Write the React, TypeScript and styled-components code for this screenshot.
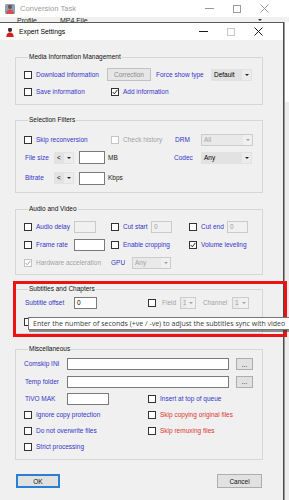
import React from "react";
import styled, { createGlobalStyle } from "styled-components";

const GlobalStyle = createGlobalStyle`
  html, body { margin: 0; padding: 0; }
  body {
    width: 289px; height: 500px; overflow: hidden; background: #f0f0f0;
    font-family: "Liberation Sans", Arial, sans-serif;
  }
  #root { width: 289px; height: 500px; }
`;

const Page = styled.div`
  position: relative;
  width: 289px;
  height: 500px;
  overflow: hidden;
  background: #f0f0f0;
  display: flex;
  flex-direction: column;
`;

/* ---------- background window ---------- */
const BackTitle = styled.div`
  height: 17px;
  flex: none;
  background: #ffffff;
  display: flex;
  align-items: center;
  padding-left: 5px;
  box-sizing: border-box;
`;

const BackTitleText = styled.span`
  margin-left: 5px;
  font-size: 7.6px;
  color: #9c9c9c;
  flex: 1;
  white-space: nowrap;
`;

const BackRow = styled.div`
  height: 5px;
  flex: none;
  overflow: hidden;
  background: #f0f0f0;
  display: flex;
  align-items: flex-end;
  padding-left: 17px;
  box-sizing: border-box;
  font-size: 7px;
  color: #222;
`;

const BackRowText = styled.span<{ $w: number }>`
  width: ${(p) => p.$w}px;
  flex: none;
  line-height: 8px;
  margin-bottom: -3px;
`;

const BackArrow = styled.span`
  margin-left: auto;
  margin-right: 27px;
  margin-bottom: 1px;
  border-left: 2.5px solid transparent;
  border-right: 2.5px solid transparent;
  border-top: 2.5px solid #333;
`;

/* ---------- dialog ---------- */
const DialogArea = styled.div`
  flex: 1;
  display: flex;
  min-height: 0;
`;

const Dialog = styled.div`
  width: 283px;
  flex: none;
  display: flex;
  flex-direction: column;
  border-top: 1px solid #5a5a5a;
  border-right: 1px solid #4a4a4a;
  background: #f0f0f0;
`;

const RightStrip = styled.div`
  flex: 1;
  background: linear-gradient(#ffffff 0 80px, #ececec 80px);
  border-left: 1px solid #9a9a9a;
`;

const TitleBar = styled.div`
  height: 17px;
  flex: none;
  background: #ffffff;
  display: flex;
  align-items: center;
  padding-left: 5px;
`;

const TitleText = styled.span`
  margin-left: 4px;
  font-size: 6.8px;
  color: #000;
  flex: 1;
  white-space: nowrap;
`;

const Controls = styled.div`
  display: flex;
  align-items: center;
  padding-right: 12px;
`;

const CtrlBtn = styled.span<{ $w: number }>`
  width: ${(p) => p.$w}px;
  display: flex;
  justify-content: center;
  align-items: center;
`;

const Body = styled.div`
  flex: 1;
  padding: 13px 0 0 15px;
  display: flex;
  flex-direction: column;
`;

const Group = styled.fieldset<{ $mt: number; $pt: number; $pb: number }>`
  margin: ${(p) => p.$mt}px 0 0 0;
  width: 248px;
  box-sizing: border-box;
  padding: ${(p) => p.$pt}px 0 ${(p) => p.$pb}px 8px;
  border: 1px solid #d6d6d6;
  min-inline-size: 0;
`;

const Legend = styled.legend`
  font-size: 6.5px;
  line-height: 8px;
  padding: 0 1px;
  margin-left: 4px;
  color: #111;
`;

const Row = styled.div<{ $h: number }>`
  height: ${(p) => p.$h}px;
  display: flex;
  align-items: center;
`;

const Cell = styled.div<{ $w: number }>`
  width: ${(p) => p.$w}px;
  flex: none;
  display: flex;
  align-items: center;
  white-space: nowrap;
`;

type Tone = "blue" | "red" | "grey" | "dark";
const toneColor: Record<Tone, string> = {
  blue: "#3535c9",
  red: "#e03434",
  grey: "#a3a3a3",
  dark: "#1a1a1a",
};

const Label = styled.span<{ $tone?: Tone; $indent?: number }>`
  font-size: 6.5px;
  line-height: 8px;
  color: ${(p) => toneColor[p.$tone || "blue"]};
  margin-left: ${(p) => p.$indent || 0}px;
  white-space: nowrap;
`;

const Box = styled.span<{ $disabled?: boolean }>`
  width: 8px;
  height: 8px;
  flex: none;
  box-sizing: border-box;
  border: 1px solid ${(p) => (p.$disabled ? "#c4c4c4" : "#333")};
  background: #fff;
  display: flex;
  align-items: center;
  justify-content: center;
  margin-right: 4px;
`;

const TextBox = styled.div<{ $w: number; $h?: number; $disabled?: boolean }>`
  width: ${(p) => p.$w}px;
  height: ${(p) => p.$h || 12}px;
  flex: none;
  box-sizing: border-box;
  border: 1px solid ${(p) => (p.$disabled ? "#cacaca" : "#7a7a7a")};
  background: ${(p) => (p.$disabled ? "#f0f0f0" : "#fff")};
  font-size: 6.5px;
  line-height: 10px;
  padding-left: 2px;
  color: ${(p) => (p.$disabled ? "#a0a0a0" : "#000")};
`;

const SelectBox = styled.div<{ $w: number; $disabled?: boolean }>`
  width: ${(p) => p.$w}px;
  height: 12px;
  flex: none;
  box-sizing: border-box;
  display: flex;
  border: 1px solid ${(p) => (p.$disabled ? "#cccccc" : "#e2e2e2")};
  background: ${(p) => (p.$disabled ? "#e9e9e9" : "#e2e2e2")};
  font-size: 6.5px;
  line-height: 10px;
  color: ${(p) => (p.$disabled ? "#a3a3a3" : "#000")};
`;

const SelectText = styled.span`
  flex: 1;
  padding-left: 2px;
  overflow: hidden;
  white-space: nowrap;
`;

const SelectArrow = styled.span<{ $disabled?: boolean }>`
  width: 9px;
  flex: none;
  display: flex;
  align-items: center;
  justify-content: center;
  background: ${(p) => (p.$disabled ? "#f0f0f0" : "#ececec")};
  &::after {
    content: "";
    border-left: 2px solid transparent;
    border-right: 2px solid transparent;
    border-top: 2px solid ${(p) => (p.$disabled ? "#a0a0a0" : "#222")};
  }
`;

const Button = styled.div<{ $w: number; $h?: number; $disabled?: boolean; $default?: boolean }>`
  width: ${(p) => p.$w}px;
  height: ${(p) => p.$h || 12}px;
  flex: none;
  box-sizing: border-box;
  border: 1px solid ${(p) => (p.$default ? "#2a7fd4" : p.$disabled ? "#c2c2c2" : "#adadad")};
  box-shadow: ${(p) => (p.$default ? "inset 0 0 0 1px #2a7fd4" : "none")};
  background: ${(p) => (p.$disabled ? "#e6e6e6" : "#e1e1e1")};
  display: flex;
  align-items: center;
  justify-content: center;
  font-size: 6.5px;
  color: ${(p) => (p.$disabled ? "#8c8c8c" : "#111")};
`;

const Spacer = styled.div<{ $w: number }>`
  width: ${(p) => p.$w}px;
  flex: none;
`;

const ButtonRow = styled.div`
  margin-top: 14px;
  width: 248px;
  display: flex;
  justify-content: space-between;
  padding: 0 1px;
  box-sizing: border-box;
`;

/* ---------- overlays ---------- */
const Highlight = styled.div`
  position: absolute;
  left: 13px;
  top: 281px;
  width: 274px;
  height: 56px;
  box-sizing: border-box;
  border: 3px solid #ee1313;
  pointer-events: none;
`;

const Tooltip = styled.div`
  position: absolute;
  left: 28px;
  top: 317px;
  width: 262px;
  height: 13px;
  box-sizing: border-box;
  border: 1px solid #767676;
  background: #ffffff;
  box-shadow: 1px 2px 0 rgba(60, 60, 60, 0.55);
  font-family: "Open Sans", "Liberation Sans", sans-serif;
  font-size: 7px;
  line-height: 11px;
  color: #3a3a3a;
  padding-left: 4px;
  white-space: nowrap;
`;

/* ---------- drawings ---------- */
const Check = ({ grey }: { grey?: boolean }) => (
  <svg width="6" height="6" viewBox="0 0 6 6">
    <polyline points="0.6,3 2.3,4.8 5.4,0.9" fill="none" stroke={grey ? "#a8a8a8" : "#222"} strokeWidth="1" />
  </svg>
);

const CheckBox = ({
  label,
  tone,
  checked,
  disabled,
}: {
  label?: string;
  tone?: Tone;
  checked?: boolean;
  disabled?: boolean;
}) => (
  <>
    <Box $disabled={disabled}>{checked && <Check grey={disabled} />}</Box>
    {label && <Label $tone={disabled ? "grey" : tone}>{label}</Label>}
  </>
);

const Select = ({ w, text, disabled }: { w: number; text: string; disabled?: boolean }) => (
  <SelectBox $w={w} $disabled={disabled}>
    <SelectText>{text}</SelectText>
    <SelectArrow $disabled={disabled} />
  </SelectBox>
);

const AppIcon = ({ faded }: { faded?: boolean }) => (
  <svg width="10" height="10" viewBox="0 0 10 10" style={{ opacity: faded ? 0.8 : 1 }}>
    {faded && <rect x="0" y="0" width="10" height="10" rx="1.5" fill="#6f8aa8" />}
    <circle cx="5" cy="3" r="2" fill="#3a2a2a" />
    <path d="M1.3 10 C1.5 6.4 3 5.4 5 5.4 C7 5.4 8.5 6.4 8.7 10 Z" fill="#d32020" />
    <rect x="3.3" y="1.2" width="3.4" height="1.1" fill="#7a1515" />
  </svg>
);

const MinIcon = ({ color }: { color: string }) => (
  <svg width="9" height="9" viewBox="0 0 9 9">
    <line x1="0" y1="4.5" x2="9" y2="4.5" stroke={color} strokeWidth="1" />
  </svg>
);

const MaxIcon = ({ color }: { color: string }) => (
  <svg width="8" height="8" viewBox="0 0 8 8">
    <rect x="0.5" y="0.5" width="7" height="7" fill="none" stroke={color} strokeWidth="1" />
  </svg>
);

const CloseIcon = ({ color }: { color: string }) => (
  <svg width="9" height="9" viewBox="0 0 9 9">
    <path d="M0.5 0.5 L8.5 8.5 M8.5 0.5 L0.5 8.5" stroke={color} strokeWidth="1" />
  </svg>
);

const WindowControls = ({ dim, maxDim }: { dim?: boolean; maxDim?: boolean }) => {
  const c = dim ? "#9a9a9a" : "#1a1a1a";
  return (
    <Controls>
      <CtrlBtn $w={28}>
        <MinIcon color={c} />
      </CtrlBtn>
      <CtrlBtn $w={28}>
        <MaxIcon color={maxDim ? "#c8c8c8" : c} />
      </CtrlBtn>
      <CtrlBtn $w={26}>
        <CloseIcon color={c} />
      </CtrlBtn>
    </Controls>
  );
};

export default function App() {
  return (
    <>
      <GlobalStyle />
      <Page>
        <BackTitle>
          <AppIcon faded />
          <BackTitleText>Conversion Task</BackTitleText>
          <WindowControls dim />
        </BackTitle>
        <BackRow>
          <BackRowText $w={43}>Profile</BackRowText>
          <BackRowText $w={60}>MP4 File</BackRowText>
          <BackArrow />
        </BackRow>

        <DialogArea>
          <Dialog>
            <TitleBar>
              <AppIcon />
              <TitleText>Expert Settings</TitleText>
              <WindowControls maxDim />
            </TitleBar>

            <Body>
              <Group $mt={0} $pt={5} $pb={4}>
                <Legend>Media Information Management</Legend>
                <Row $h={17}>
                  <Cell $w={83}>
                    <CheckBox label="Download information" />
                  </Cell>
                  <Button $w={44} $h={13} $disabled>
                    Correction
                  </Button>
                  <Spacer $w={5} />
                  <Cell $w={55}>
                    <Label>Force show type</Label>
                  </Cell>
                  <Select w={41} text="Default" />
                </Row>
                <Row $h={17}>
                  <Cell $w={87}>
                    <CheckBox label="Save information" />
                  </Cell>
                  <Cell $w={80}>
                    <CheckBox label="Add information" checked />
                  </Cell>
                </Row>
              </Group>

              <Group $mt={11} $pt={7} $pb={3}>
                <Legend>Selection Filters</Legend>
                <Row $h={17}>
                  <Cell $w={87}>
                    <CheckBox label="Skip reconversion" />
                  </Cell>
                  <Cell $w={64}>
                    <CheckBox label="Check history" disabled />
                  </Cell>
                  <Cell $w={26}>
                    <Label>DRM</Label>
                  </Cell>
                  <Select w={52} text="All" disabled />
                </Row>
                <Row $h={19}>
                  <Cell $w={30}>
                    <Label $indent={1}>File size</Label>
                  </Cell>
                  <Select w={20} text="<" />
                  <Spacer $w={5} />
                  <TextBox $w={26} $h={13} />
                  <Cell $w={69}>
                    <Label $tone="dark" $indent={3}>MB</Label>
                  </Cell>
                  <Cell $w={27}>
                    <Label>Codec</Label>
                  </Cell>
                  <Select w={51} text="Any" />
                </Row>
                <Row $h={22}>
                  <Cell $w={30}>
                    <Label $indent={1}>Bitrate</Label>
                  </Cell>
                  <Select w={20} text="<" />
                  <Spacer $w={5} />
                  <TextBox $w={26} $h={13} />
                  <Cell $w={30}>
                    <Label $tone="dark" $indent={3}>Kbps</Label>
                  </Cell>
                </Row>
              </Group>

              <Group $mt={12} $pt={5} $pb={2}>
                <Legend>Audio and Video</Legend>
                <Row $h={18}>
                  <Cell $w={50}>
                    <CheckBox label="Audio delay" />
                  </Cell>
                  <TextBox $w={22} $disabled />
                  <Spacer $w={15} />
                  <Cell $w={40}>
                    <CheckBox label="Cut start" />
                  </Cell>
                  <TextBox $w={21} $disabled>
                    0
                  </TextBox>
                  <Spacer $w={17} />
                  <Cell $w={38}>
                    <CheckBox label="Cut end" />
                  </Cell>
                  <TextBox $w={21} $disabled>
                    0
                  </TextBox>
                </Row>
                <Row $h={18}>
                  <Cell $w={50}>
                    <CheckBox label="Frame rate" />
                  </Cell>
                  <TextBox $w={31} />
                  <Spacer $w={6} />
                  <Cell $w={78}>
                    <CheckBox label="Enable cropping" />
                  </Cell>
                  <Cell $w={60}>
                    <CheckBox label="Volume leveling" checked />
                  </Cell>
                </Row>
                <Row $h={18}>
                  <Cell $w={87}>
                    <CheckBox label="Hardware acceleration" checked disabled />
                  </Cell>
                  <Cell $w={21}>
                    <Label>GPU</Label>
                  </Cell>
                  <Select w={39} text="Any" disabled />
                </Row>
              </Group>

              <Group $mt={10} $pt={1} $pb={2}>
                <Legend>Subtitles and Chapters</Legend>
                <Row $h={18}>
                  <Cell $w={50}>
                    <Label $indent={1}>Subtitle offset</Label>
                  </Cell>
                  <TextBox $w={23}>0</TextBox>
                  <Spacer $w={51} />
                  <Cell $w={32}>
                    <CheckBox />
                    <Label $tone="grey" $indent={2}>Field</Label>
                  </Cell>
                  <Select w={16} text="1" disabled />
                  <Spacer $w={7} />
                  <Cell $w={29}>
                    <Label $tone="grey">Channel</Label>
                  </Cell>
                  <Select w={17} text="1" disabled />
                </Row>
                <Row $h={19}>
                  <Cell $w={60}>
                    <CheckBox />
                  </Cell>
                  <Cell $w={64}>
                    <CheckBox />
                  </Cell>
                  <Cell $w={60}>
                    <CheckBox />
                  </Cell>
                </Row>
              </Group>

              <Group $mt={11} $pt={2} $pb={4}>
                <Legend>Miscellaneous</Legend>
                <Row $h={18}>
                  <Cell $w={43}>
                    <Label>Comskip INI</Label>
                  </Cell>
                  <TextBox $w={162} />
                  <Spacer $w={7} />
                  <Button $w={17}>...</Button>
                </Row>
                <Row $h={17}>
                  <Cell $w={43}>
                    <Label $indent={1}>Temp folder</Label>
                  </Cell>
                  <TextBox $w={162} />
                  <Spacer $w={7} />
                  <Button $w={17}>...</Button>
                </Row>
                <Row $h={17}>
                  <Cell $w={43}>
                    <Label $indent={1}>TiVO MAK</Label>
                  </Cell>
                  <TextBox $w={42} />
                  <Spacer $w={39} />
                  <Cell $w={90}>
                    <CheckBox label="Insert at top of queue" />
                  </Cell>
                </Row>
                <Row $h={16}>
                  <Cell $w={124}>
                    <CheckBox label="Ignore copy protection" />
                  </Cell>
                  <Cell $w={100}>
                    <CheckBox label="Skip copying original files" tone="red" />
                  </Cell>
                </Row>
                <Row $h={16}>
                  <Cell $w={124}>
                    <CheckBox label="Do not overwrite files" />
                  </Cell>
                  <Cell $w={100}>
                    <CheckBox label="Skip remuxing files" tone="red" />
                  </Cell>
                </Row>
                <Row $h={16}>
                  <Cell $w={124}>
                    <CheckBox label="Strict processing" />
                  </Cell>
                </Row>
              </Group>

              <ButtonRow>
                <Button $w={44} $h={14} $default>
                  OK
                </Button>
                <Button $w={45} $h={14}>
                  Cancel
                </Button>
              </ButtonRow>
            </Body>
          </Dialog>
          <RightStrip />
        </DialogArea>

        <Highlight />
        <Tooltip>Enter the number of seconds (+ve / -ve) to adjust the subtitles sync with video</Tooltip>
      </Page>
    </>
  );
}
